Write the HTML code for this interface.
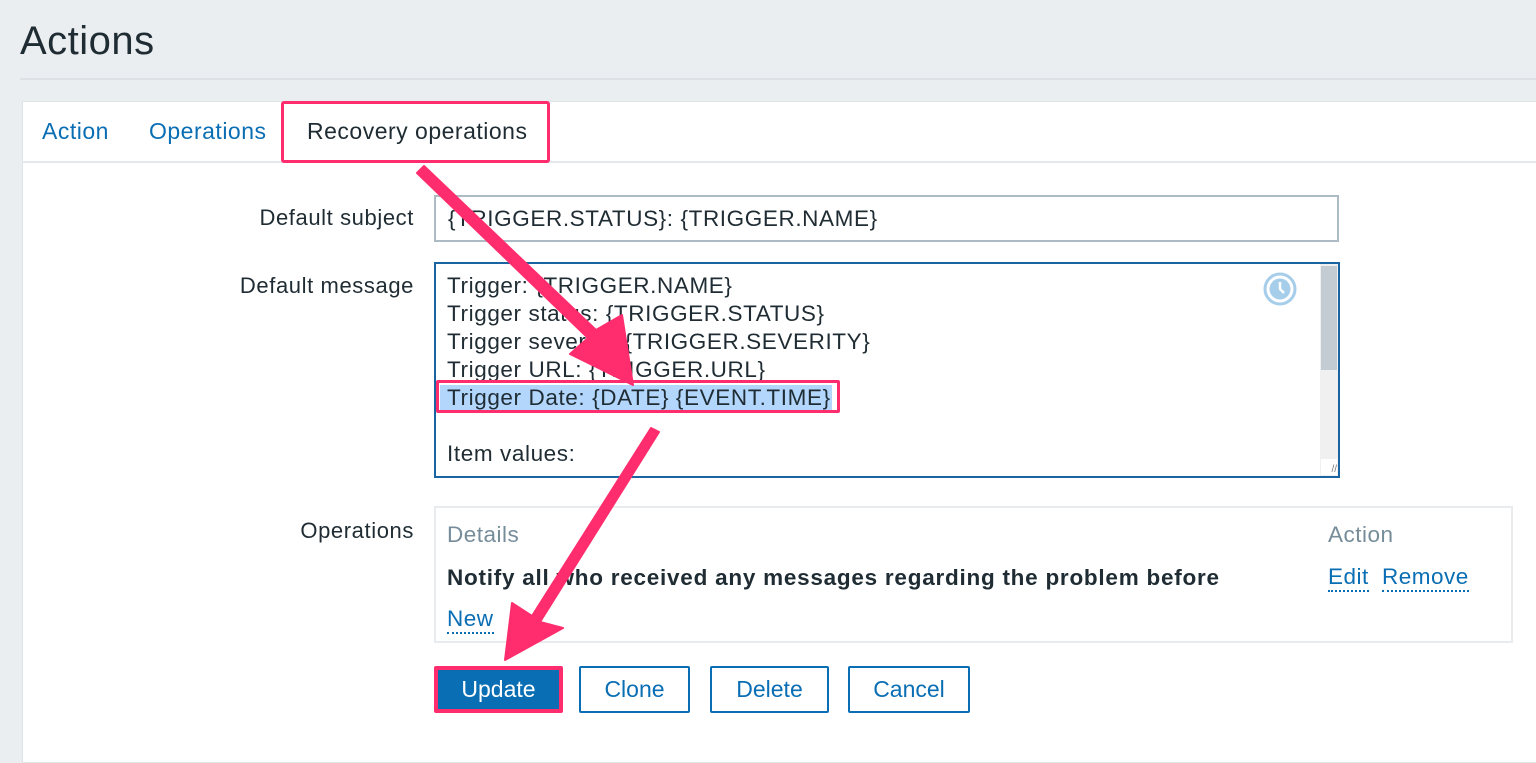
<!DOCTYPE html>
<html><head><meta charset="utf-8"><style>
body{margin:0;width:1536px;height:734px;overflow:hidden;background:#ebeef0;font-family:"Liberation Sans",sans-serif;position:relative;color:#1f2c33}
.a{position:absolute}
h1{position:absolute;left:20px;top:19px;margin:0;font-weight:normal;font-size:40px;letter-spacing:0.5px;color:#1f2c33}
.hr{left:20px;top:78px;width:1516px;height:2px;background:#dde1e5}
.panel{left:22px;top:101px;width:1514px;height:660px;background:#fff;border:1px solid #dfe4e7}
.tabline{left:22px;top:161px;width:1514px;height:2px;background:#e4e8eb}
.tab{font-size:23px;letter-spacing:0.5px;top:118px;color:#0a6eb4}
.lbl{font-size:22px;letter-spacing:0.6px;text-align:right;width:340px;left:74px}
.inp{border:2px solid #acbbc4;background:#fff;box-sizing:border-box}
.ta div{height:28px;line-height:28px;font-size:22.5px;letter-spacing:0.6px;white-space:nowrap}
.btn{top:666px;height:47px;box-sizing:border-box;border:2px solid #0a6eb4;border-radius:2px;color:#0a6eb4;font-size:23px;text-align:center;line-height:43px;background:#fff}
.lnk{color:#0a6eb4;border-bottom:2px dotted #0a6eb4;font-size:22.5px;letter-spacing:0.5px}
</style></head><body>
<h1>Actions</h1>
<div class="a hr"></div>
<div class="a panel"></div>
<div class="a tabline"></div>
<div class="a tab" style="left:42px">Action</div>
<div class="a tab" style="left:149px">Operations</div>
<div class="a tab" style="left:307px;color:#1f2c33">Recovery operations</div>
<div class="a" style="left:281px;top:101px;width:263px;height:56px;border:3px solid #ff2d6d;border-radius:3px"></div>

<div class="a lbl" style="top:205px">Default subject</div>
<div class="a inp" style="left:434px;top:195px;width:905px;height:47px;padding:9px 0 0 12px;font-size:22.5px;letter-spacing:0.6px">{TRIGGER.STATUS}: {TRIGGER.NAME}</div>
<div class="a lbl" style="top:273px">Default message</div>
<div class="a" style="left:434px;top:262px;width:906px;height:216px;border:2px solid #1a64a2;box-sizing:border-box;background:#fff"></div>
<div class="a" style="left:1320px;top:264px;width:18px;height:212px;background:#f0f0f0"></div>
<div class="a" style="left:1321px;top:266px;width:16px;height:104px;background:#c4ccd3"></div>
<div class="a" style="left:1321px;top:459px;width:16px;height:16px;background:#fff;font-size:10px;color:#777;text-align:right;line-height:22px">//</div>
<svg class="a" style="left:1262px;top:271px" width="36" height="36"><circle cx="18" cy="18" r="15" fill="#fff" stroke="#a6cdea" stroke-width="3"/><circle cx="18" cy="18" r="10.5" fill="#a6cdea"/><path d="M18 11v7l4 4" stroke="#fff" stroke-width="2.5" fill="none"/></svg>
<div class="a" style="left:440px;top:385px;width:392px;height:26px;background:#b3d6fc"></div>
<div class="a ta" style="left:447px;top:272px">
<div>Trigger: {TRIGGER.NAME}</div><div>Trigger status: {TRIGGER.STATUS}</div><div>Trigger severity: {TRIGGER.SEVERITY}</div><div>Trigger URL: {TRIGGER.URL}</div><div>Trigger Date: {DATE} {EVENT.TIME}</div><div></div><div>Item values:</div></div>
<div class="a" style="left:436px;top:380px;width:398px;height:27px;border:3px solid #ff2d6d;border-radius:2px"></div>

<div class="a lbl" style="top:518px">Operations</div>
<div class="a" style="left:434px;top:506px;width:1079px;height:137px;border:2px solid #e8ecef;box-sizing:border-box"></div>
<div class="a" style="left:447px;top:522px;font-size:22.5px;letter-spacing:0.5px;color:#768d99">Details</div>
<div class="a" style="left:1328px;top:522px;font-size:22.5px;letter-spacing:0.5px;color:#768d99">Action</div>
<div class="a" style="left:447px;top:565px;font-size:22.5px;letter-spacing:0.75px;font-weight:bold">Notify all who received any messages regarding the problem before</div>
<div class="a lnk" style="left:1328px;top:564px">Edit</div>
<div class="a lnk" style="left:1382px;top:564px">Remove</div>
<div class="a lnk" style="left:447px;top:606px">New</div>

<div class="a btn" style="left:434px;width:129px;background:#0a6eb4;color:#fff;border:4px solid #ff2d6d;line-height:39px">Update</div>
<div class="a btn" style="left:579px;width:111px">Clone</div>
<div class="a btn" style="left:710px;width:119px">Delete</div>
<div class="a btn" style="left:848px;width:122px">Cancel</div>

<svg class="a" style="left:0;top:0" width="1536" height="734">
<g fill="#ff2d6d" stroke="#ff2d6d" stroke-linejoin="round" stroke-width="2">
<polygon points="417,173 424,166 596,330 622,315 633,385 570,354 588,338"/>
<polygon points="651,428 659,432 540,622 563,628 505,660 512,603 532,616"/>
</g></svg>
</body></html>
